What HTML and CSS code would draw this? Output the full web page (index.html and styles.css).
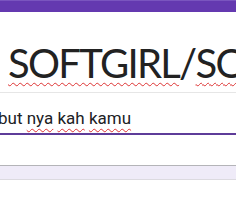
FILE: index.html
```html
<!DOCTYPE html>
<html lang="id">
<head>
    <meta charset="UTF-8">
    <meta name="viewport" content="width=device-width, initial-scale=1.0">
    <title>Form</title>
    <link rel="stylesheet" href="styles.css">
</head>
<body>
    <div class="top-bar"></div>

    <div class="form-head">
        <div class="title-field">
            <span class="spell">SOFTGIRL</span>/<span class="spell">SOFTBOY</span>
        </div>
        <div class="desc-field">
            <span class="desc-text">but <span class="spell">nya</span> <span class="spell">kah</span> <span class="spell">kamu</span></span>
        </div>
    </div>

    <div class="toolbar"></div>
</body>
</html>
```

FILE: styles.css
```css
* {
    box-sizing: border-box;
    margin: 0;
    padding: 0;
}

body {
    width: 236px;
    height: 213px;
    overflow: hidden;
    background-color: #fff;
    font-family: Roboto, Arial, sans-serif;
    color: #202124;
}

.top-bar {
    height: 12px;
    background-color: #6439b0;
    border-top: 1px solid #7a55bf;
}

.form-head {
    padding-top: 27px;
}

.title-field {
    font-family: Lato, 'Open Sans', sans-serif;
    font-size: 40px;
    letter-spacing: -1.7px;
    line-height: 48px;
    padding-left: 8px;
    white-space: nowrap;
    color: #222;
    padding-bottom: 5px;
    border-bottom: 1px solid #e6e6e6;
}

.spell {
    text-decoration: underline wavy #d33;
    text-decoration-thickness: 1px;
    text-underline-offset: 4px;
}

.desc-field {
    margin-top: 12px;
    height: 30px;
    white-space: nowrap;
    overflow: hidden;
    border-bottom: 2px solid #5e3c99;
    text-indent: -2px;
}

.desc-text {
    font-size: 17px;
    line-height: 26px;
}

.toolbar {
    margin-top: 30px;
    height: 15px;
    background-color: #efebf8;
    border-top: 1px solid #b4b4b8;
    border-bottom: 1px solid #dcdae0;
}
```
